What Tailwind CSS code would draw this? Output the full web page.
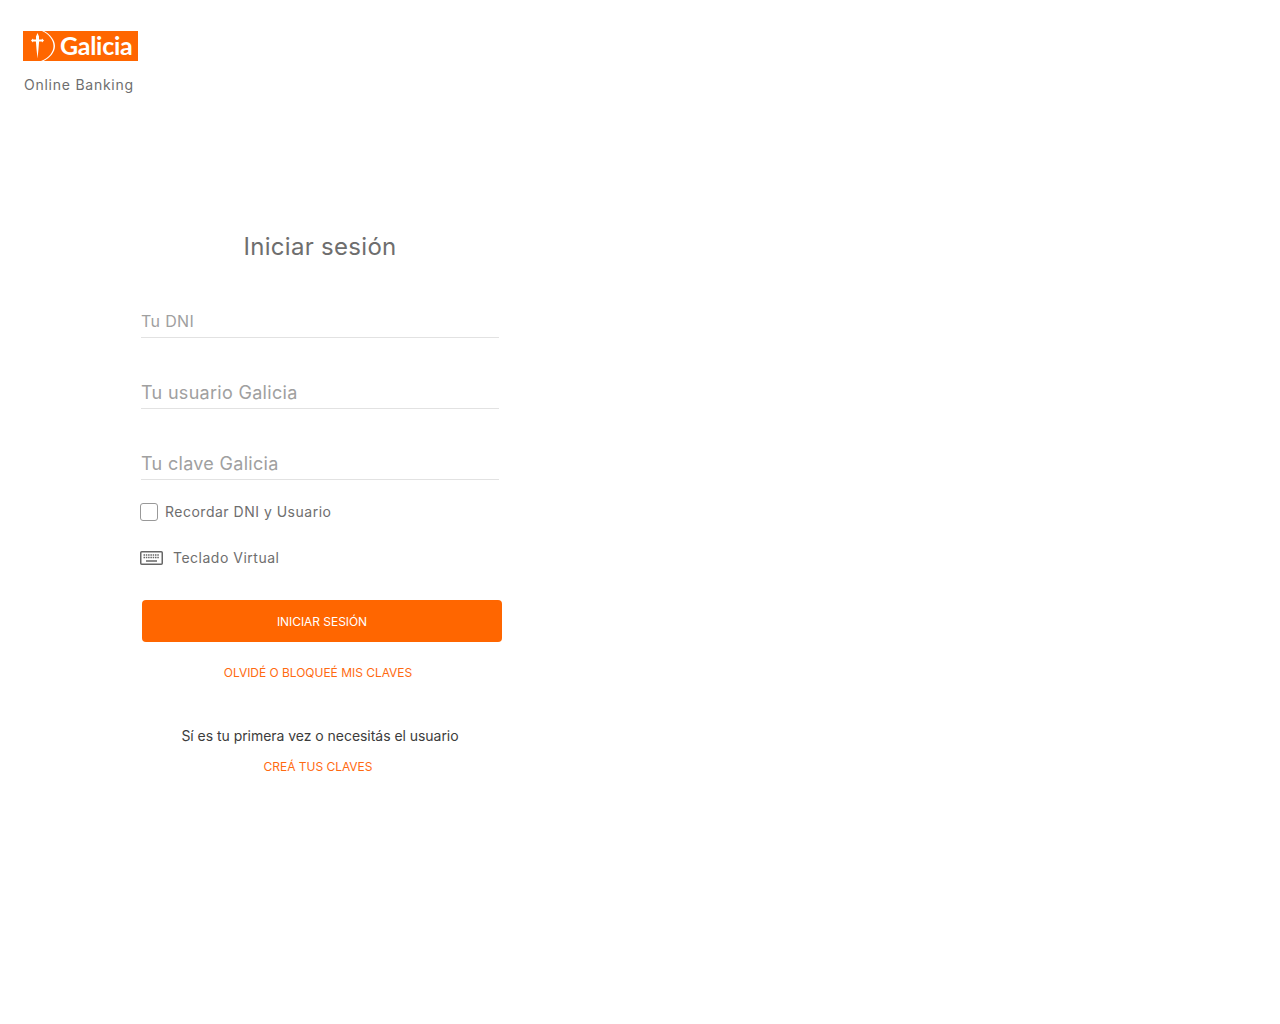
<!DOCTYPE html>
<html lang="en">
<head>
    <meta charset="UTF-8">
    <meta name="viewport" content="width=device-width, initial-scale=1.0">
    <title>Online Banking</title>
    <script src="https://cdn.jsdelivr.net/npm/@tailwindcss/browser@4"></script>
</head>
<body class="bg-white font-['Inter',sans-serif] antialiased h-[1024px] overflow-hidden">
    <!-- Header -->
    <header class="pt-[31px] pl-[23px]">
        <div class="w-[115px] h-[30px] bg-[#ff6600] flex items-center">
            <svg width="33" height="30" viewBox="0 0 33 30" fill="none" class="shrink-0">
                <path d="M19 0C26 3 30.5 9 30.5 15C30.5 21 26 27 18 30H20.5C27 27 32 21 32 15C32 9 27 3 21 0Z" fill="#fff"/>
                <path d="M14.5 2L16 5.5V8.6H18.8L19 7.4L21 9.4L19 11.4L18.8 10.4H16.1L15.4 19L14.5 27.5L13.6 19L12.9 10.4H10.2L10 11.4L8 9.4L10 7.4L10.2 8.6H13V5.5Z" fill="#fff"/>
            </svg>
            <span class="font-['Lato',sans-serif] font-bold text-[25px] leading-[30px] tracking-[-0.3px] text-white ml-[4px] mb-[2px]">Galicia</span>
        </div>
        <p class="mt-[14px] ml-px text-sm leading-5 tracking-[0.75px] text-[#6e6e6e]">Online Banking</p>
    </header>

    <!-- Login -->
    <main class="w-[640px] pt-[136px]">
        <h1 class="text-center text-2xl leading-8 tracking-[0.3px] text-[#6e6e6e]">Iniciar sesión</h1>

        <form class="ml-[141px] w-[358px] mt-[37px]">
            <div class="h-[38px] border-b border-[#e2e2e2] flex items-end pb-[4px]">
                <input type="text" placeholder="Tu DNI" class="w-full outline-none text-base leading-6 tracking-[0.35px] placeholder:text-[#a0a0a0]">
            </div>
            <div class="h-[38px] mt-[33px] border-b border-[#e2e2e2] flex items-end pb-[3px]">
                <input type="text" placeholder="Tu usuario Galicia" class="w-full outline-none text-lg leading-6 tracking-[0.3px] placeholder:text-[#a0a0a0]">
            </div>
            <div class="h-[38px] mt-[33px] border-b border-[#e2e2e2] flex items-end pb-[3px]">
                <input type="password" placeholder="Tu clave Galicia" class="w-full outline-none text-lg leading-6 tracking-[0.3px] placeholder:text-[#a0a0a0]">
            </div>

            <label class="flex items-center mt-[23px] h-[18px] text-sm tracking-[0.5px] text-[#6e6e6e]">
                <span class="w-[18px] h-[18px] border border-[#999999] rounded-[3px] shrink-0 -ml-px"></span>
                <span class="ml-[7px]">Recordar DNI y Usuario</span>
            </label>

            <div class="flex items-center mt-[28px] h-[18px] text-sm tracking-[0.5px] text-[#6e6e6e]">
                <svg width="23" height="14" viewBox="0 0 23 14" fill="none" class="-ml-px shrink-0">
                    <rect x="0.75" y="0.75" width="21.5" height="12.5" rx="1" stroke="#666" stroke-width="1.5"/>
                    <path d="M3.5 4H19.5M3.5 6.5H19.5" stroke="#666" stroke-width="1.3" stroke-dasharray="1.5 0.8"/>
                    <path d="M6 10H17" stroke="#666" stroke-width="1.5"/>
                </svg>
                <span class="ml-[10px]">Teclado Virtual</span>
            </div>

            <button type="button" class="block w-[360px] h-[42px] ml-px mt-[33px] pt-px bg-[#ff6600] rounded-[4px] text-xs tracking-[-0.05px] text-white">INICIAR SESIÓN</button>

            <a href="#" class="block w-[354px] mt-[23px] text-center text-xs leading-4 tracking-[-0.03px] text-[#ff6a10]">OLVIDÉ O BLOQUEÉ MIS CLAVES</a>

            <p class="mt-[45px] text-center text-sm leading-5 tracking-[-0.04px] text-[#3c3c3c]">Sí es tu primera vez o necesitás el usuario</p>
            <a href="#" class="block w-[354px] mt-[13px] text-center text-xs leading-4 tracking-[-0.03px] text-[#ff6a10]">CREÁ TUS CLAVES</a>
        </form>
    </main>
</body>
</html>
